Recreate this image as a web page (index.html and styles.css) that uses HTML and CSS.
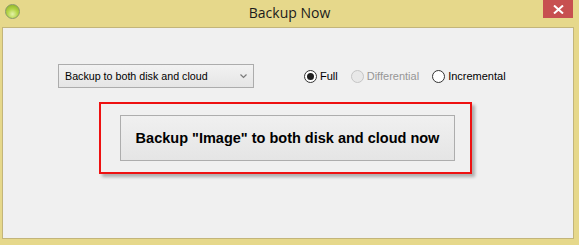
FILE: index.html
```html
<!DOCTYPE html>
<html>
<head>
<meta charset="utf-8">
<link rel="stylesheet" href="styles.css">
</head>
<body>
<div class="window">
  <div class="titlebar">
    <span class="app-icon"></span>
    <span class="title">Backup Now</span>
    <span class="close"><svg width="11" height="9" viewBox="0 0 11 9"><path d="M1 0.5 L10 8.5 M10 0.5 L1 8.5" stroke="#fff" stroke-width="2"/></svg></span>
  </div>
  <div class="client">
    <div class="options">
      <div class="combo">
        <span class="combo-text">Backup to both disk and cloud</span>
        <svg class="chev" width="7" height="5" viewBox="0 0 7 5"><path d="M0.5 0.5 L3.5 3.5 L6.5 0.5" fill="none" stroke="#7a7a7a" stroke-width="1.2"/></svg>
      </div>
      <div class="radios">
        <label class="radio"><span class="dot checked"></span>Full</label>
        <label class="radio disabled"><span class="dot"></span>Differential</label>
        <label class="radio"><span class="dot"></span>Incremental</label>
      </div>
    </div>
    <div class="highlight">
      <button class="backup-btn">Backup "Image" to both disk and cloud now</button>
    </div>
  </div>
</div>
</body>
</html>
```
FILE: styles.css
```css
html, body {
  margin: 0;
  padding: 0;
}
body {
  width: 579px;
  height: 245px;
  background: #e6d88b;
  overflow: hidden;
}
.window {
  display: flex;
  flex-direction: column;
  height: 245px;
}
.titlebar {
  height: 27px;
  display: flex;
  align-items: flex-start;
  position: relative;
}
.app-icon {
  width: 15px;
  height: 15px;
  margin: 4px 0 0 5px;
  border-radius: 50%;
  box-sizing: border-box;
  border: 1px solid #8a9a6a;
  background: radial-gradient(circle at 50% 70%, #e4f2a8 0%, #b5d548 45%, #86ad1c 100%);
}
.title {
  position: absolute;
  left: 0;
  right: 0;
  top: 4px;
  text-align: center;
  font-family: "Open Sans", "Noto Sans", sans-serif;
  font-size: 14px;
  color: #1b1b1b;
  line-height: 18px;
}
.close {
  margin-left: auto;
  margin-right: 6px;
  width: 30px;
  height: 18px;
  background: #c75050;
  display: flex;
  align-items: center;
  justify-content: center;
  position: relative;
}
.client {
  flex: 1;
  margin: 0 5px 6px 2px;
  border: 1px solid #c3b57a;
  background: #f0f0f0;
  font-family: "Liberation Sans", Arial, sans-serif;
  font-size: 11px;
}
.options {
  display: flex;
  align-items: center;
  margin: 36px 0 0 55px;
}
.combo {
  width: 196px;
  height: 24px;
  box-sizing: border-box;
  border: 1px solid #acacac;
  background: linear-gradient(#f2f2f2, #e5e5e5);
  display: flex;
  align-items: center;
  padding: 0 6px 0 6px;
  color: #000;
  font-size: 10.7px;
}
.combo-text {
  flex: 1;
}
.radios {
  display: flex;
  align-items: center;
  margin-left: 50px;
}
.radio {
  display: flex;
  align-items: center;
  color: #000;
  margin-right: 13px;
}
.radio .dot {
  width: 13px;
  height: 13px;
  box-sizing: border-box;
  border-radius: 50%;
  border: 1px solid #333;
  background: #fff;
  margin-right: 3px;
  display: flex;
  align-items: center;
  justify-content: center;
}
.radio .dot.checked::after {
  content: "";
  width: 7px;
  height: 7px;
  border-radius: 50%;
  background: #1f1f1f;
}
.radio.disabled {
  color: #969696;
}
.radio.disabled .dot {
  border-color: #c5c5c5;
  background: #e8e8e8;
}
.highlight {
  width: 373px;
  height: 72px;
  box-sizing: border-box;
  margin: 14px 0 0 96px;
  border: 2px solid #ee1111;
  box-shadow: 3px 3px 3px rgba(0, 0, 0, 0.28);
  padding: 11px 0 0 19px;
}
.backup-btn {
  width: 335px;
  height: 46px;
  box-sizing: border-box;
  border: 1px solid #adadad;
  background: linear-gradient(#f0f0f0, #e5e5e5);
  font-family: "Liberation Sans", Arial, sans-serif;
  font-weight: bold;
  font-size: 14.5px;
  color: #000;
  padding: 0;
  margin: 0;
}
```
